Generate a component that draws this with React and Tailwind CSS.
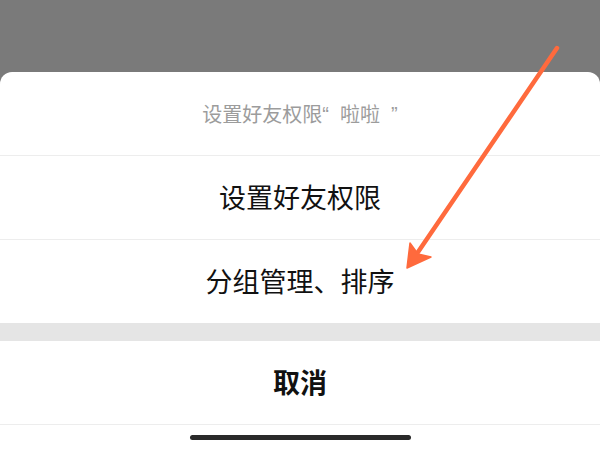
import React from "react";

const rows = ["设置好友权限", "分组管理、排序"];

const ArrowOverlay = () => (
  <svg className="absolute inset-0 pointer-events-none" width="600" height="450" viewBox="0 0 600 450">
    <line x1="557" y1="48" x2="416" y2="255" stroke="#ff6a3d" strokeWidth="4.5" strokeLinecap="round" />
    <path d="M410 243 L407 268 L431 257 L418 254 Z" fill="#ff6a3d" stroke="#ff6a3d" strokeWidth="1.5" strokeLinejoin="round" />
  </svg>
);

export default function App() {
  return (
    <div
      className="relative w-[600px] h-[450px] overflow-hidden bg-[#7a7a7a] flex flex-col"
      style={{ fontFamily: '"Noto Sans CJK SC", "Noto Sans", sans-serif' }}
    >
      <div className="h-[72px] shrink-0" />
      <div className="flex-1 bg-white rounded-t-[12px] flex flex-col">
        <div className="h-[84px] flex items-center justify-center border-b border-[#ededed] text-[20px] text-[#9c9c9c] whitespace-pre">
          设置好友权限
          <span className="font-['Liberation_Sans'] text-[20px]">{"“  "}</span>
          啦啦
          <span className="font-['Liberation_Sans'] text-[20px]">{"  ”"}</span>
        </div>
        {rows.map((label, i) => (
          <div
            key={label}
            className={`flex items-center justify-center text-[27px] text-[#111] ${
              i === 0 ? "h-[84px] border-b border-[#ededed]" : "h-[83px]"
            }`}
          >
            {label}
          </div>
        ))}
        <div className="h-[18px] bg-[#e5e5e5]" />
        <div className="h-[84px] flex items-center justify-center border-b border-[#ededed] text-[27px] font-semibold text-[#111]">
          取消
        </div>
        <div className="flex-1 flex justify-center pt-[10px]">
          <div className="w-[221px] h-[5px] rounded-full bg-[#2a2a2a]" />
        </div>
      </div>
      <ArrowOverlay />
    </div>
  );
}
